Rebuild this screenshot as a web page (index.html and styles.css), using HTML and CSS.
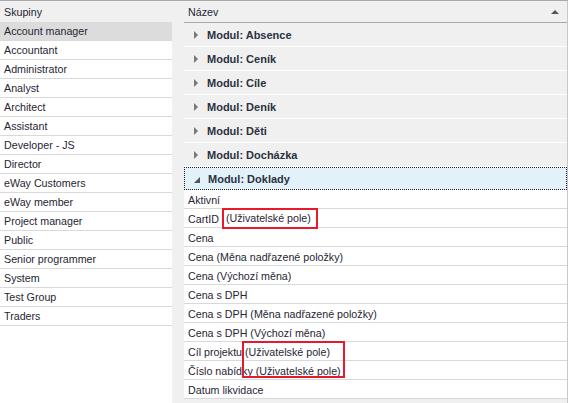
FILE: index.html
```html
<!DOCTYPE html>
<html lang="cs">
<head>
    <meta charset="UTF-8">
    <title>Skupiny a oprávnění</title>
    <link rel="stylesheet" href="styles.css">
</head>
<body>
<div class="layout">
    <div class="groups-panel">
        <div class="panel-header">Skupiny</div>
        <ul class="group-list">
            <li class="selected">Account manager</li>
            <li>Accountant</li>
            <li>Administrator</li>
            <li>Analyst</li>
            <li>Architect</li>
            <li>Assistant</li>
            <li>Developer - JS</li>
            <li>Director</li>
            <li>eWay Customers</li>
            <li>eWay member</li>
            <li>Project manager</li>
            <li>Public</li>
            <li>Senior programmer</li>
            <li>System</li>
            <li>Test Group</li>
            <li>Traders</li>
        </ul>
    </div>

    <div class="fields-panel">
        <div class="panel-header fields-header">
            <span>Název</span>
            <span class="sort-arrow"></span>
        </div>
        <div class="module-row"><span class="arrow-collapsed"></span>Modul: Absence</div>
        <div class="module-row"><span class="arrow-collapsed"></span>Modul: Ceník</div>
        <div class="module-row"><span class="arrow-collapsed"></span>Modul: Cíle</div>
        <div class="module-row"><span class="arrow-collapsed"></span>Modul: Deník</div>
        <div class="module-row"><span class="arrow-collapsed"></span>Modul: Děti</div>
        <div class="module-row"><span class="arrow-collapsed"></span>Modul: Docházka</div>
        <div class="module-row expanded"><span class="arrow-expanded"></span>Modul: Doklady</div>
        <ul class="field-list">
            <li>Aktivní</li>
            <li>CartID<span class="marked">(Uživatelské pole)</span></li>
            <li>Cena</li>
            <li>Cena (Měna nadřazené položky)</li>
            <li>Cena (Výchozí měna)</li>
            <li>Cena s DPH</li>
            <li>Cena s DPH (Měna nadřazené položky)</li>
            <li>Cena s DPH (Výchozí měna)</li>
            <li>Cíl projektu (Uživatelské pole)</li>
            <li>Číslo nabídky (Uživatelské pole)</li>
            <li>Datum likvidace</li>
            <!-- red frame over the two custom fields -->
            <div class="mark-box"></div>
        </ul>
    </div>
</div>
</body>
</html>
```

FILE: styles.css
```css
body, html {
    margin: 0;
    padding: 0;
    height: 403px;
    overflow: hidden;
    background-color: #f0f0f0;
    font-family: "Liberation Sans", Arial, sans-serif;
    font-size: 10.7px;
    color: #1f2633;
}

.layout {
    display: flex;
    height: 403px;
    border-top: 1px solid #a9a9a9;
    box-sizing: border-box;
}

ul {
    list-style: none;
    margin: 0;
    padding: 0;
}

.groups-panel {
    width: 172px;
    background-color: #fff;
    margin-right: 12px;
}

.panel-header {
    height: 21px;
    line-height: 22px;
    padding-left: 4px;
    background-color: #f0f0f0;
}

.group-list li {
    height: 18px;
    line-height: 19px;
    padding-left: 4px;
    border-bottom: 1px solid #d9d9d9;
}

.group-list li.selected {
    background-color: #dcdcdc;
}

.fields-panel {
    flex: 1;
    border-right: 1px solid #c8c8c8;
}

.fields-header {
    display: flex;
    justify-content: space-between;
    align-items: center;
    border-bottom: 1px solid #a9a9a9;
}

.sort-arrow {
    width: 0;
    height: 0;
    margin-right: 8px;
    border-left: 4px solid transparent;
    border-right: 4px solid transparent;
    border-bottom: 4px solid #555;
}

.module-row {
    display: flex;
    align-items: center;
    height: 23px;
    border-bottom: 1px solid #fff;
    font-size: 11px;
    font-weight: bold;
    color: #2a3140;
    padding-left: 10px;
}

.arrow-collapsed {
    width: 0;
    height: 0;
    margin-right: 9px;
    border-top: 4px solid transparent;
    border-bottom: 4px solid transparent;
    border-left: 4px solid #777;
}

.module-row.expanded {
    height: 21px;
    background-color: #e3f1fa;
    border: 1px dotted #222;
    padding-left: 8px;
}

.arrow-expanded {
    width: 0;
    height: 0;
    margin: 3px 8px 0 1px;
    border-left: 6px solid transparent;
    border-bottom: 6px solid #555;
}

.field-list {
    position: relative;
    background-color: #fff;
}

.field-list li {
    display: flex;
    align-items: center;
    height: 17px;
    padding-left: 4px;
    padding-top: 1px;
    border-bottom: 1px solid #d9d9d9;
    white-space: nowrap;
}

.marked {
    display: inline-block;
    height: 17px;
    line-height: 17px;
    padding: 0 5px 0 2px;
    margin-left: 5px;
    outline: 2px solid #e8192c;
}

.mark-box {
    position: absolute;
    left: 58px;
    top: 151px;
    width: 99px;
    height: 33px;
    border: 2px solid #e8192c;
}
```
